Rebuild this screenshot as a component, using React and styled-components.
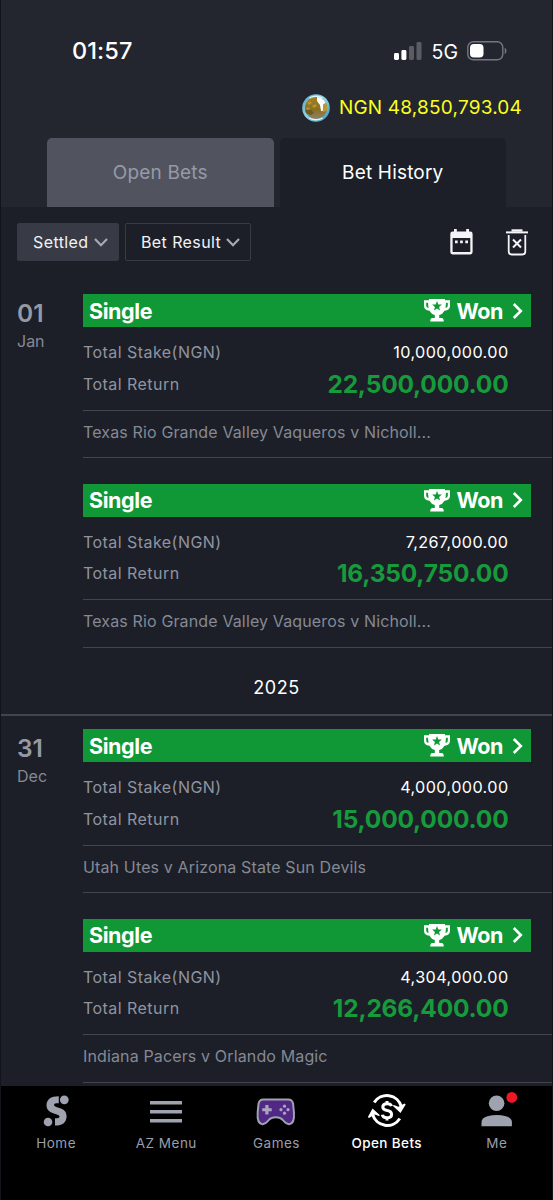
import styled, { createGlobalStyle } from "styled-components";

const GlobalStyle = createGlobalStyle`
  * {
    box-sizing: border-box;
  }

  body {
    margin: 0;
    background: #1c1f27;
    font-family: Inter, "Liberation Sans", sans-serif;
  }
`;

const Screen = styled.main`
  display: flex;
  flex-direction: column;
  width: 553px;
  height: 1200px;
  overflow: hidden;
  background: #1c1f27;
  border: solid #12141a;
  border-width: 0 1px;
`;

const Header = styled.header`
  display: flex;
  flex-direction: column;
  flex: none;
  height: 207px;
  background: #23262f;
`;

const StatusBar = styled.div`
  display: flex;
  align-items: center;
  justify-content: space-between;
  height: 82px;
  padding: 19px 44px 0 71px;
  color: white;
`;

const Clock = styled.span`
  font-size: 23.5px;
  font-weight: 550;
  letter-spacing: 0.1px;
`;

const StatusIcons = styled.div`
  display: flex;
  align-items: center;
`;

const Network = styled.span`
  margin: 2px 9px 0 10px;
  font-size: 19.5px;
  font-weight: 400;
`;

const Balance = styled.div`
  display: flex;
  align-items: center;
  justify-content: flex-end;
  gap: 9px;
  height: 50px;
  padding: 1px 30px 0 0;
  color: #fbff1f;
  font-size: 19px;
  letter-spacing: 0.2px;
`;

const Tabs = styled.nav`
  display: flex;
  gap: 6px;
  margin-top: auto;
  padding: 0 46px;
`;

const Tab = styled.button`
  width: 227px;
  height: 69px;
  border: 0;
  border-radius: 5px 5px 0 0;
  background: ${({ $active }) => ($active ? "#1c1f27" : "#51545f")};
  color: ${({ $active }) => ($active ? "#ffffff" : "#959aa6")};
  font: 400 19px Inter, sans-serif;
  letter-spacing: 0.18px;
`;

const Filters = styled.div`
  display: flex;
  align-items: center;
  flex: none;
  gap: 6px;
  height: 78px;
  padding: 0 23px 8px 16px;
`;

const FilterButton = styled.button`
  display: flex;
  align-items: center;
  justify-content: space-between;
  width: ${({ $width }) => $width}px;
  height: 38px;
  padding: 0 10px 0 15px;
  border: 1px solid #383b46;
  border-radius: 2px;
  background: ${({ $filled }) => ($filled ? "#383b46" : "transparent")};
  color: #f1f2f5;
  font: 400 16px Inter, sans-serif;
  letter-spacing: 0.4px;
`;

const Actions = styled.div`
  display: flex;
  align-items: center;
  gap: 32px;
  margin-left: auto;
`;

const DayGroup = styled.section`
  display: flex;
  flex: none;
  height: ${({ $height }) => $height}px;

  &:nth-of-type(2) {
    margin-top: 4px;
  }
`;

const DateColumn = styled.div`
  width: 82px;
  padding: 13px 0 0 16px;
  color: #9599a5;
`;

const DayNumber = styled.div`
  font-size: 24.5px;
  font-weight: 600;
  line-height: 30px;
`;

const Month = styled.div`
  margin-top: 1px;
  font-size: 16px;
  line-height: 24px;
  color: #858994;
`;

const Bets = styled.div`
  flex: 1;
  padding-top: 9px;
`;

const Bet = styled.article`
  height: 189.6px;
`;

const Ribbon = styled.div`
  display: flex;
  align-items: center;
  width: 448px;
  height: 33px;
  padding: 0 8px 0 6px;
  background: #109837;
  color: white;
  font-size: 21.5px;
  font-weight: 700;
  letter-spacing: -0.4px;
`;

const Result = styled.div`
  display: flex;
  align-items: center;
  margin-left: auto;
`;

const Outcome = styled.span`
  margin: 0 9px 0 6px;
`;

const Amounts = styled.dl`
  display: grid;
  grid-template-columns: auto 1fr;
  grid-template-rows: 31.5px 31.5px;
  align-items: center;
  height: 83.6px;
  margin: 0;
  padding: 9.4px 43.5px 0 0;
  border-bottom: 1px solid #42454c;
`;

const Label = styled.dt`
  color: #9094a0;
  font-size: 16px;
  letter-spacing: 0.45px;
`;

const Stake = styled.dd`
  margin: 0;
  color: white;
  font-size: 16.2px;
  text-align: right;
  letter-spacing: 0.4px;
`;

const Return = styled.dd`
  margin: 0;
  color: #169a3c;
  font-size: 24.5px;
  font-weight: 650;
  text-align: right;
  letter-spacing: -0.2px;
`;

const Match = styled.p`
  height: 47.6px;
  margin: 0;
  border-bottom: 1px solid #42454c;
  color: #858994;
  font-size: 16px;
  line-height: 42px;
  letter-spacing: 0.14px;
`;

const YearDivider = styled.div`
  flex: none;
  height: 52px;
  border-bottom: 2px solid #42454c;
  color: white;
  font-size: 18px;
  line-height: 47px;
  text-align: center;
  letter-spacing: 0.6px;
`;

const BottomNav = styled.nav`
  display: grid;
  grid-template-columns: repeat(5, 1fr);
  flex: none;
  height: 114px;
  margin-top: auto;
  background: black;
`;

const NavItem = styled.div`
  display: flex;
  flex-direction: column;
  align-items: center;
  padding-top: 6px;
  color: ${({ $active }) => ($active ? "#ffffff" : "#9a9eaa")};
  font-size: 13.5px;
  font-weight: ${({ $active }) => ($active ? 500 : 400)};
  letter-spacing: ${({ $active }) => ($active ? 0.4 : 0.5)}px;
`;

const NavLabel = styled.span`
  margin-top: 3px;
  line-height: 20px;
`;

const Signal = () => (
  <svg width="28" height="18" viewBox="0 0 28 18" fill="white">
    <rect x="0" y="11" width="5" height="7" rx="1.4" />
    <rect x="7.4" y="8" width="5" height="10" rx="1.4" />
    <rect x="15" y="4" width="5" height="14" rx="1.4" opacity=".25" />
    <rect x="22.5" y="0" width="5" height="18" rx="1.4" opacity=".25" />
  </svg>
);

const Battery = () => (
  <svg width="41" height="20" viewBox="0 0 41 20">
    <rect x=".8" y=".8" width="35" height="18" rx="5.5" fill="none" stroke="#74777e" strokeWidth="1.4" />
    <rect x="3" y="3" width="13.5" height="13.6" rx="3.8" fill="white" />
    <path d="M37.7 6.7c2.3.8 2.3 5.5 0 6.3z" fill="#74777e" />
  </svg>
);

const CoinPhoto = () => (
  <svg width="28" height="28" viewBox="0 0 28 28">
    <defs>
      <linearGradient id="ring" x1="0" y1="0" x2="1" y2="1">
        <stop offset="0" stopColor="#5aa5c2" />
        <stop offset=".5" stopColor="#8fd3e8" />
        <stop offset="1" stopColor="#2e91b9" />
      </linearGradient>
      <linearGradient id="ground" x1="0" y1="0" x2="0" y2="1">
        <stop offset="0" stopColor="#a88524" />
        <stop offset=".55" stopColor="#8a6f22" />
        <stop offset="1" stopColor="#8f8880" />
      </linearGradient>
      <clipPath id="photo">
        <circle cx="14" cy="14" r="11" />
      </clipPath>
    </defs>
    <circle cx="14" cy="14" r="13.8" fill="url(#ring)" />
    <path d="M7 3.5Q14-.5 21 3.5L19 6H9zM7 24.5q7 4 14 0L19 22H9z" fill="#d9f5fa" />
    <g clipPath="url(#photo)">
      <rect width="28" height="28" fill="url(#ground)" />
      <path d="m5 9 3-2 2 2-3 2zm5 3 3-2 2 2-3 2zm-6 2 3-1 1 2-3 1z" fill="#b8932e" />
      <path d="M3 16h6l3 3-3 2-6-2z" fill="#6b5a24" />
      <path d="M15 1h9v8l-3 2v6h-2l-1-6-3-4z" fill="#fff" />
      <path d="m21.5 10 4-2v9l-5 1z" fill="#bc9937" />
    </g>
  </svg>
);

const Chevron = () => (
  <svg width="14" height="9" viewBox="0 0 14 9" fill="none" stroke="#a6a9b4" strokeWidth="2.2">
    <path d="m1 1 6 6.2L13 1" />
  </svg>
);

const Calendar = () => (
  <svg width="23" height="26" viewBox="0 0 23 26">
    <path
      fill="#f3f4f7"
      fillRule="evenodd"
      d="M4 0h2.8v2.6h9.4V0H19v2.6h1.4q2.2 0 2.2 2.4v18q0 2.4-2.2 2.4H2.5Q.3 25.4.3 23V5q0-2.4 2.2-2.4H4zM2.6 9v14h17.7V9z"
    />
    <path fill="#f3f4f7" d="M5 11.5h2.7v2.7H5zm5.1 0h2.7v2.7h-2.7zm5.2 0H18v2.7h-2.7z" />
  </svg>
);

const TrashX = () => (
  <svg width="24" height="27" viewBox="0 0 24 27" fill="none" stroke="#f3f4f7" strokeWidth="2">
    <path d="M1 3.4h22" />
    <path d="M6.5 1.5h11" strokeWidth="2.4" />
    <path d="M3.7 6v16.5q0 3 3 3h10.6q3 0 3-3V6" strokeWidth="1.8" />
    <path d="m8 10.5 8 8m0-8-8 8" />
  </svg>
);

const Trophy = () => (
  <svg width="26" height="23" viewBox="0 0 26 23">
    <path
      fill="white"
      fillRule="evenodd"
      d="M5 0h16v1.200h5v5.500q0 4.500-5.500 5-1.800 3.500-5.300 4.300v3h2.600q1.900.3 2 3.500H6.200q.1-3.200 2-3.500h2.600v-3q-3.500-.8-5.300-4.300Q0 11.200 0 6.700V1.200h5zM2.200 3.700v3q0 1.700 2.300 2.200L4 3.700zm19.800 0-.5 5.200q2.300-.5 2.300-2.200v-3z"
    />
    <path fill="#109837" d="m13 2 1.300 3.400 3.600.2-2.800 2.300.9 3.500-3-1.900-3 1.900.9-3.500-2.800-2.300 3.600-.2z" />
  </svg>
);

const Arrow = () => (
  <svg width="11" height="16" viewBox="0 0 11 16" fill="none" stroke="white" strokeWidth="2.6">
    <path d="m1.800 1 7 7-7 7" />
  </svg>
);

const HomeIcon = () => (
  <svg width="38" height="38" viewBox="0 0 38 38">
    <g fill="#9fa3af">
      <circle cx="27.3" cy="7.8" r="4.4" />
      <circle cx="11" cy="30" r="4.3" />
      <path d="M21.800 4.200v7h-2.500q-2.300 0-2.300 1.700 0 1.400 3 2.300l4 1.200q5.600 2 5.600 7.500Q29.600 33.500 18 33.500v-7.200h2.200q2.400 0 2.400-1.700 0-1.300-2.700-2.100l-3.800-1.200Q9.500 19.300 9.500 13.500q0-9.300 12.300-9.300z" />
    </g>
  </svg>
);

const MenuIcon = () => (
  <svg width="38" height="38" viewBox="0 0 38 38" fill="#9fa3af">
    <path d="M3 9h32v3.600H3zm0 9h32v3.600H3zm0 9h32v3.600H3z" />
  </svg>
);

const GamesIcon = () => (
  <svg width="42" height="38" viewBox="0 0 42 38">
    <path
      d="M8.500 7.500h24.600q4.200 0 5 4.300l.8 8.200q.9 11.600-4.600 12.200-3 .2-6-3.700-2.500-3.300-7.500-3.300t-7.500 3.300q-3 3.900-6 3.700-5.500-.6-4.600-12.200l.8-8.200q.8-4.300 5-4.300z"
      fill="#512886"
      stroke="#9fa3af"
      strokeWidth="2"
    />
    <g fill="#aaa5bd">
      <path d="M10.300 13h3.200v3.200h3.200v3h-3.200v3.300h-3.200v-3.300H7.200v-3h3.100z" />
      <circle cx="29.5" cy="14.2" r="1.6" />
      <circle cx="33" cy="17.7" r="1.6" />
      <circle cx="26" cy="17.7" r="1.6" />
      <circle cx="29.5" cy="21.2" r="1.6" />
    </g>
  </svg>
);

const OpenBetsIcon = () => (
  <svg width="40" height="38" viewBox="0 0 40 38">
    <g fill="none" stroke="white" strokeWidth="3">
      <path d="M7.200 10.500A15 15 0 0 1 34.300 14.500" />
      <path d="M5.700 22.500A15 15 0 0 0 32.800 26.500" />
      <path d="M24.500 14.200q-.7-2.400-4.500-2.400-4.200 0-4.200 3.200 0 2.800 4.400 3.600 4.400.8 4.400 3.900 0 3.300-4.600 3.300-4.200 0-4.700-3M20 9v3m0 13.500v3" />
    </g>
    <path fill="white" d="m25.700 13.800 1-.8 4.800 1.700 6-3.200 1.200 1-5.200 8.500zM13 23.300l-1 .8-4.300-1.500-5.700 3.500-1.100-1L5.500 16.500z" />
  </svg>
);

const MeIcon = () => (
  <svg width="48" height="38" viewBox="0 0 48 38">
    <g fill="#9fa3af">
      <circle cx="23.6" cy="11.2" r="7.8" />
      <path d="M8.500 34.200v-4q0-4.300 6-6 9.200-2.600 18.400 0 6 1.700 6 6v4z" />
    </g>
    <circle cx="38.8" cy="5.4" r="5.4" fill="#ef1626" />
  </svg>
);

const days = [
  {
    day: "01",
    month: "Jan",
    height: 379,
    bets: [
      { stake: "10,000,000.00", total: "22,500,000.00", match: "Texas Rio Grande Valley Vaqueros v Nicholl..." },
      { stake: "7,267,000.00", total: "16,350,750.00", match: "Texas Rio Grande Valley Vaqueros v Nicholl..." },
    ],
  },
  {
    day: "31",
    month: "Dec",
    height: 366,
    bets: [
      { stake: "4,000,000.00", total: "15,000,000.00", match: "Utah Utes v Arizona State Sun Devils" },
      { stake: "4,304,000.00", total: "12,266,400.00", match: "Indiana Pacers v Orlando Magic" },
    ],
  },
];

const BetDay = ({ data }) => (
  <DayGroup $height={data.height}>
    <DateColumn>
      <DayNumber>{data.day}</DayNumber>
      <Month>{data.month}</Month>
    </DateColumn>
    <Bets>
      {data.bets.map((bet) => (
        <Bet key={bet.stake}>
          <Ribbon>
            Single
            <Result>
              <Trophy />
              <Outcome>Won</Outcome>
              <Arrow />
            </Result>
          </Ribbon>
          <Amounts>
            <Label>Total Stake(NGN)</Label>
            <Stake>{bet.stake}</Stake>
            <Label>Total Return</Label>
            <Return>{bet.total}</Return>
          </Amounts>
          <Match>{bet.match}</Match>
        </Bet>
      ))}
    </Bets>
  </DayGroup>
);

export default function App() {
  return (
    <>
      <GlobalStyle />
      <Screen>
        <Header>
          <StatusBar>
            <Clock>01:57</Clock>
            <StatusIcons>
              <Signal />
              <Network>5G</Network>
              <Battery />
            </StatusIcons>
          </StatusBar>
          <Balance>
            <CoinPhoto />
            NGN 48,850,793.04
          </Balance>
          <Tabs>
            <Tab>Open Bets</Tab>
            <Tab $active>Bet History</Tab>
          </Tabs>
        </Header>
        <Filters>
          <FilterButton $filled $width={102}>
            Settled
            <Chevron />
          </FilterButton>
          <FilterButton $width={126}>
            Bet Result
            <Chevron />
          </FilterButton>
          <Actions>
            <Calendar />
            <TrashX />
          </Actions>
        </Filters>
        <BetDay data={days[0]} />
        <YearDivider>2025</YearDivider>
        <BetDay data={days[1]} />
        <BottomNav>
          <NavItem>
            <HomeIcon />
            <NavLabel>Home</NavLabel>
          </NavItem>
          <NavItem>
            <MenuIcon />
            <NavLabel>AZ Menu</NavLabel>
          </NavItem>
          <NavItem>
            <GamesIcon />
            <NavLabel>Games</NavLabel>
          </NavItem>
          <NavItem $active>
            <OpenBetsIcon />
            <NavLabel>Open Bets</NavLabel>
          </NavItem>
          <NavItem>
            <MeIcon />
            <NavLabel>Me</NavLabel>
          </NavItem>
        </BottomNav>
      </Screen>
    </>
  );
}
